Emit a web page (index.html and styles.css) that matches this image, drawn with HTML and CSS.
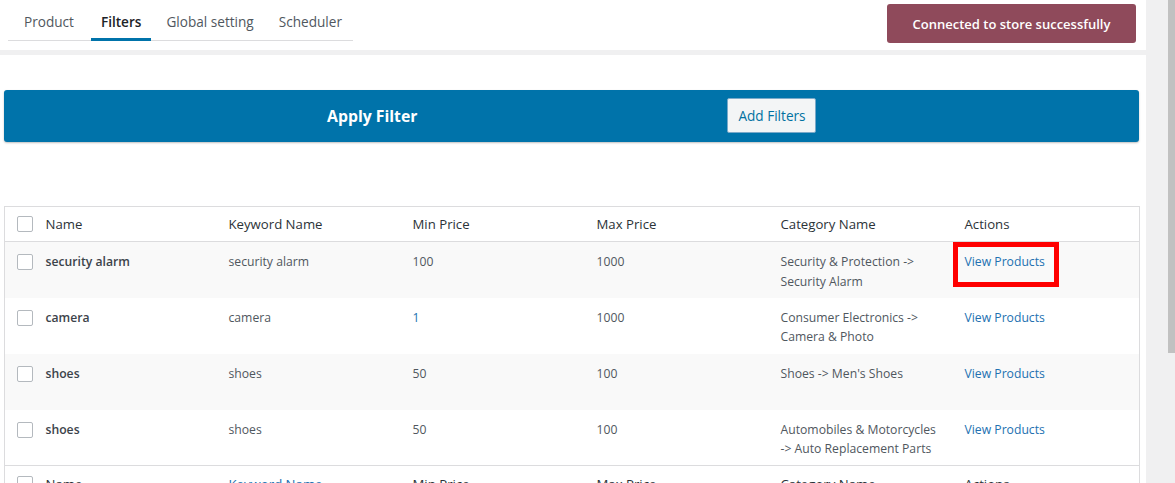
FILE: index.html
```html
<!DOCTYPE html>
<html lang="en">
<head>
<meta charset="utf-8">
<title>Filters</title>
<link rel="stylesheet" href="styles.css">
</head>
<body>
<div class="page">
  <div class="main">
    <header class="topbar">
      <nav class="tabs">
        <a class="tab">Product</a>
        <a class="tab active">Filters</a>
        <a class="tab">Global setting</a>
        <a class="tab">Scheduler</a>
      </nav>
      <button class="status-btn">Connected to store successfully</button>
    </header>
    <section class="content">
      <div class="filter-bar">
        <span class="filter-title">Apply Filter</span>
        <button class="add-btn">Add Filters</button>
      </div>
      <table class="filters-table">
        <colgroup>
          <col class="c-cb"><col class="c-name"><col class="c-std"><col class="c-std"><col class="c-std"><col class="c-std"><col class="c-act">
        </colgroup>
        <thead>
          <tr>
            <th class="cb"><span class="box"></span></th>
            <th>Name</th>
            <th>Keyword Name</th>
            <th>Min Price</th>
            <th>Max Price</th>
            <th>Category Name</th>
            <th>Actions</th>
          </tr>
        </thead>
        <tbody>
          <tr class="alt">
            <td class="cb"><span class="box"></span></td>
            <td class="name">security alarm</td>
            <td>security alarm</td>
            <td>100</td>
            <td>1000</td>
            <td>Security &amp; Protection <span class="nw">-&gt;</span> Security Alarm</td>
            <td><a class="link hl">View Products<span class="highlight"></span></a></td>
          </tr>
          <tr>
            <td class="cb"><span class="box"></span></td>
            <td class="name">camera</td>
            <td>camera</td>
            <td class="blue">1</td>
            <td>1000</td>
            <td>Consumer Electronics <span class="nw">-&gt;</span> Camera &amp; Photo</td>
            <td><a class="link">View Products</a></td>
          </tr>
          <tr class="alt">
            <td class="cb"><span class="box"></span></td>
            <td class="name">shoes</td>
            <td>shoes</td>
            <td>50</td>
            <td>100</td>
            <td>Shoes <span class="nw">-&gt;</span> Men's Shoes</td>
            <td><a class="link">View Products</a></td>
          </tr>
          <tr>
            <td class="cb"><span class="box"></span></td>
            <td class="name">shoes</td>
            <td>shoes</td>
            <td>50</td>
            <td>100</td>
            <td>Automobiles &amp; Motorcycles <span class="nw">-&gt;</span> Auto Replacement Parts</td>
            <td><a class="link">View Products</a></td>
          </tr>
        </tbody>
        <tfoot>
          <tr>
            <th class="cb"><span class="box"></span></th>
            <th>Name</th>
            <th class="blue">Keyword Name</th>
            <th>Min Price</th>
            <th>Max Price</th>
            <th>Category Name</th>
            <th>Actions</th>
          </tr>
        </tfoot>
      </table>
    </section>
  </div>
  <div class="scrollbar"><div class="thumb"></div></div>
</div>
</body>
</html>
```

FILE: styles.css
```css
* { box-sizing: border-box; }
html, body {
  margin: 0;
  height: 483px;
  overflow: hidden;
}
body {
  background: #f0f0f1;
  font-family: "Segoe UI", "Open Sans", "Noto Sans", sans-serif;
  color: #50575e;
}
.page {
  display: flex;
  width: 1175px;
  height: 483px;
}
.main {
  width: 1146px;
  display: flex;
  flex-direction: column;
  gap: 5px;
}
.topbar {
  flex: none;
  background: #fff;
  height: 50px;
  display: flex;
  justify-content: space-between;
  align-items: flex-start;
  padding: 4px 10px 0 8px;
}
.tabs {
  display: flex;
  gap: 7px;
  padding-left: 6px;
  margin-top: -4px;
  border-bottom: 1px solid #dcdcde;
  height: 41px;
  width: 345px;
}
.tab {
  font-size: 13.6px;
  font-weight: 500;
  color: #50575e;
  padding: 12px 10px 0;
  line-height: 20px;
  height: 41px;
  border-bottom: 3px solid transparent;
  white-space: nowrap;
}
.tab + .tab + .tab { margin-left: -2px; }
.tab.active {
  color: #1d2327;
  font-weight: 600;
  border-bottom-color: #0073aa;
}
.status-btn {
  width: 249px;
  height: 39px;
  background: #8f4a5b;
  color: #fff;
  border: 0;
  border-radius: 3px;
  font-family: inherit;
  font-size: 13px;
  font-weight: 600;
}
.content {
  flex: 1;
  background: #fff;
  padding: 35px 7px 0 4px;
}
.filter-bar {
  height: 52px;
  background: #0073aa;
  border-radius: 3px;
  box-shadow: 0 1px 2px rgba(0,0,0,.25);
  display: flex;
  align-items: center;
  padding-left: 323px;
}
.filter-title {
  color: #fff;
  font-size: 15.8px;
  font-weight: 700;
}
.add-btn {
  margin-left: 310px;
  height: 35px;
  width: 89px;
  padding: 0;
  background: #f3f5f6;
  color: #0071a1;
  border: 1px solid #7aa9c9;
  border-radius: 2px;
  font-family: inherit;
  font-size: 13.6px;
  margin-top: -1px;
}
.filters-table {
  margin-top: 64px;
  width: 1135px;
  table-layout: fixed;
  border-collapse: collapse;
  border: 1px solid #dcdcde;
  font-size: 12.2px;
}
.c-cb { width: 31px; }
.c-name { width: 183px; }
.c-std { width: 184px; }
.c-act { width: 185px; }
th {
  height: 36px;
  text-align: left;
  font-weight: 400;
  font-size: 13.2px;
  color: #2c3338;
  padding: 0 10px;
  vertical-align: middle;
}
thead th { border-bottom: 1px solid #dcdcde; height: 35px; }
tfoot th { border-top: 1px solid #dcdcde; }
td {
  height: 56px;
  vertical-align: top;
  padding: 10px 10px 0;
  line-height: 19.5px;
}
.nw { white-space: nowrap; }
tr.alt td { background: #f9f9f9; }
th.cb, td.cb { padding: 0 0 0 12px; }
td.cb { padding-top: 12px; }
.box {
  display: block;
  width: 16px;
  height: 16px;
  border: 1px solid #b4b9be;
  border-radius: 2px;
  background: #fff;
}
td.name {
  font-weight: 600;
  color: #3c434a;
}
.blue { color: #2271b1; }
th.blue { color: #2271b1; }
.link { color: #2271b1; }
.hl {
  position: relative;
  display: inline-block;
}
.highlight {
  position: absolute;
  left: -12px;
  right: -14px;
  top: -10px;
  bottom: -15px;
  border: 5px solid #ff0000;
}
.scrollbar {
  flex: 1;
  display: flex;
  justify-content: flex-end;
}
.thumb {
  width: 7px;
  height: 353px;
  background: #c1c1c1;
}
```
